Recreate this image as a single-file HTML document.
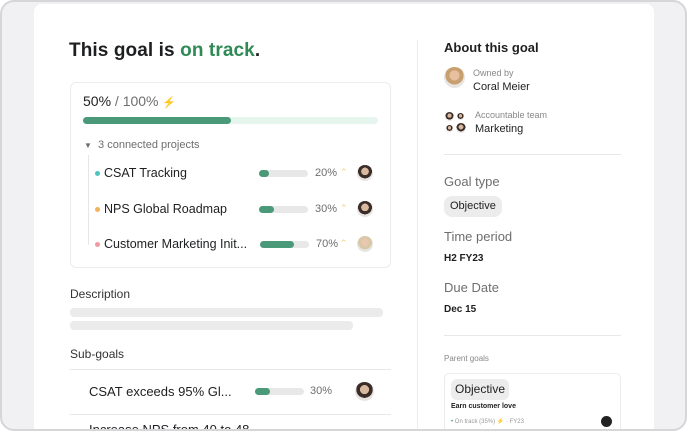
<!DOCTYPE html>
<html><head><style>
*{margin:0;padding:0;box-sizing:border-box}
body{width:687px;height:431px;overflow:hidden;background:#fff;font-family:"Liberation Sans",sans-serif;color:#1e1f21;position:relative}
.frame{position:absolute;left:0;top:0;width:687px;height:431px;border-radius:14px;background:#f1f0f2;overflow:hidden}
.frameb{position:absolute;left:0;top:0;width:687px;height:431px;border:2px solid #d6d6d8;border-radius:14px;z-index:5;box-shadow:0 0 0 6px #fff}
.card{position:absolute;left:34px;top:4px;width:620px;height:440px;background:#fff;border-radius:8px}
.a{position:absolute;white-space:nowrap}
.bar{position:absolute;height:7px;border-radius:4px;background:#e8e8e8}
.bar i{display:block;height:100%;border-radius:4px;background:#4a9a7a}
.av{position:absolute;border-radius:50%;background:radial-gradient(circle at 50% 40%,#d9b8a0 0 30%,#3a2d28 31% 55%,#e8e4e2 56%)}
.dot{position:absolute;width:5px;height:5px;border-radius:50%}
.gray{color:#6d6e6f}
.hr{position:absolute;height:1px;background:#e8e8e8}
</style></head><body>
<div class="frame">
<div class="card"></div>
</div>
<div class="frameb"></div>
<div class="a" style="left:69px;top:40px;font-size:19px;font-weight:bold;letter-spacing:0.1px">This goal is <span style="color:#2f8a55">on track</span>.</div>
<div style="position:absolute;left:70px;top:82px;width:321px;height:186px;border:1px solid #ececec;border-radius:6px"></div>
<div class="a" style="left:83px;top:93px;font-size:14px">50%<span class="gray"> / 100% </span><span style="color:#f0b030;font-size:11px">⚡</span></div>
<div class="bar" style="left:83px;top:117px;width:295px;background:#e6f5ee"><i style="width:50%"></i></div>
<div class="a gray" style="left:84px;top:139px;font-size:11px"><span style="font-size:8px">▼</span>&nbsp; 3 connected projects</div>
<div style="position:absolute;left:88px;top:155px;width:1px;height:90px;background:#e6e6e6"></div>
<div class="dot" style="left:95px;top:171px;background:#4ec3c0"></div>
<div class="a" style="left:104px;top:166px;font-size:12.5px">CSAT Tracking</div>
<div class="bar" style="left:259px;top:170px;width:49px"><i style="width:20%"></i></div>
<div class="a gray" style="left:315px;top:167px;font-size:11px">20%</div>
<div class="a" style="left:340px;top:167px;font-size:9px;color:#f0d080">⌃</div>
<div class="av" style="left:357px;top:165px;width:16px;height:16px"></div>
<div class="dot" style="left:95px;top:207px;background:#f1b35a"></div>
<div class="a" style="left:104px;top:202px;font-size:12.5px">NPS Global Roadmap</div>
<div class="bar" style="left:259px;top:206px;width:49px"><i style="width:30%"></i></div>
<div class="a gray" style="left:315px;top:203px;font-size:11px">30%</div>
<div class="a" style="left:340px;top:203px;font-size:9px;color:#f0d080">⌃</div>
<div class="av" style="left:357px;top:201px;width:16px;height:16px"></div>
<div class="dot" style="left:95px;top:242px;background:#f19aa0"></div>
<div class="a" style="left:104px;top:237px;font-size:12.5px">Customer Marketing Init...</div>
<div class="bar" style="left:260px;top:241px;width:49px"><i style="width:70%"></i></div>
<div class="a gray" style="left:316px;top:238px;font-size:11px">70%</div>
<div class="a" style="left:340px;top:238px;font-size:9px;color:#f0d080">⌃</div>
<div class="av" style="left:357px;top:236px;width:16px;height:16px;background:radial-gradient(circle at 50% 40%,#e8c8b0 0 30%,#d8c8a8 31% 55%,#e8e4e2 56%)"></div>
<div class="a" style="left:70px;top:287px;font-size:12px;color:#333">Description</div>
<div class="bar" style="left:70px;top:308px;width:313px;height:9px;background:#ebebeb"></div>
<div class="bar" style="left:70px;top:321px;width:283px;height:9px;background:#ebebeb"></div>
<div class="a" style="left:70px;top:347px;font-size:12px;color:#333">Sub-goals</div>
<div class="hr" style="left:70px;top:369px;width:321px"></div>
<div class="a" style="left:89px;top:384px;font-size:13px">CSAT exceeds 95% Gl...</div>
<div class="bar" style="left:255px;top:388px;width:49px"><i style="width:30%"></i></div>
<div class="a gray" style="left:310px;top:385px;font-size:11px">30%</div>
<div class="av" style="left:355px;top:382px;width:19px;height:19px"></div>
<div class="hr" style="left:70px;top:414px;width:321px"></div>
<div class="a" style="left:89px;top:422px;font-size:13px">Increase NPS from 40 to 48</div>
<div style="position:absolute;left:417px;top:40px;width:1px;height:391px;background:#ececec"></div>
<div class="a" style="left:444px;top:40px;font-size:13px;font-weight:bold">About this goal</div>
<div class="av" style="left:444px;top:67px;width:21px;height:21px;background:radial-gradient(circle at 50% 40%,#e8c0a0 0 30%,#c8a070 31% 55%,#e8e4e2 56%)"></div>
<div class="a" style="left:473px;top:68px;font-size:9px;color:#888">Owned by</div>
<div class="a" style="left:473px;top:81px;font-size:11px">Coral Meier</div>
<div class="av" style="left:445px;top:112px;width:9px;height:9px"></div>
<div class="av" style="left:457px;top:113px;width:7px;height:7px"></div>
<div class="av" style="left:446px;top:125px;width:7px;height:7px"></div>
<div class="av" style="left:456px;top:123px;width:10px;height:10px"></div>
<div class="a" style="left:475px;top:110px;font-size:9px;color:#888">Accountable team</div>
<div class="a" style="left:475px;top:123px;font-size:11px">Marketing</div>
<div class="hr" style="left:444px;top:154px;width:177px"></div>
<div class="a gray" style="left:444px;top:174px;font-size:13px">Goal type</div>
<div class="a" style="left:444px;top:196px;height:21px;padding:4px 6px;background:#ececec;border-radius:8px;font-size:11px">Objective</div>
<div class="a gray" style="left:444px;top:229px;font-size:13px">Time period</div>
<div class="a" style="left:444px;top:253px;font-size:10px;font-weight:bold">H2 FY23</div>
<div class="a gray" style="left:444px;top:280px;font-size:13px">Due Date</div>
<div class="a" style="left:444px;top:304px;font-size:10px;font-weight:bold">Dec 15</div>
<div class="hr" style="left:444px;top:335px;width:177px"></div>
<div class="a" style="left:444px;top:354px;font-size:8px;color:#888">Parent goals</div>
<div style="position:absolute;left:444px;top:373px;width:177px;height:60px;border:1px solid #ececec;border-radius:5px"></div>
<div class="a" style="left:451px;top:379px;height:21px;padding:3px 4px;background:#ececec;border-radius:6px;font-size:12px">Objective</div>
<div class="a" style="left:451px;top:403px;font-size:7px;font-weight:bold">Earn customer love</div>
<div class="a" style="left:451px;top:418px;font-size:6px;color:#999"><span style="color:#4a9a7a">•</span> On track (35%) <span style="color:#f0b030">⚡</span> · FY23</div>
<div class="av" style="left:601px;top:416px;width:11px;height:11px;background:#222"></div>
</body></html>
